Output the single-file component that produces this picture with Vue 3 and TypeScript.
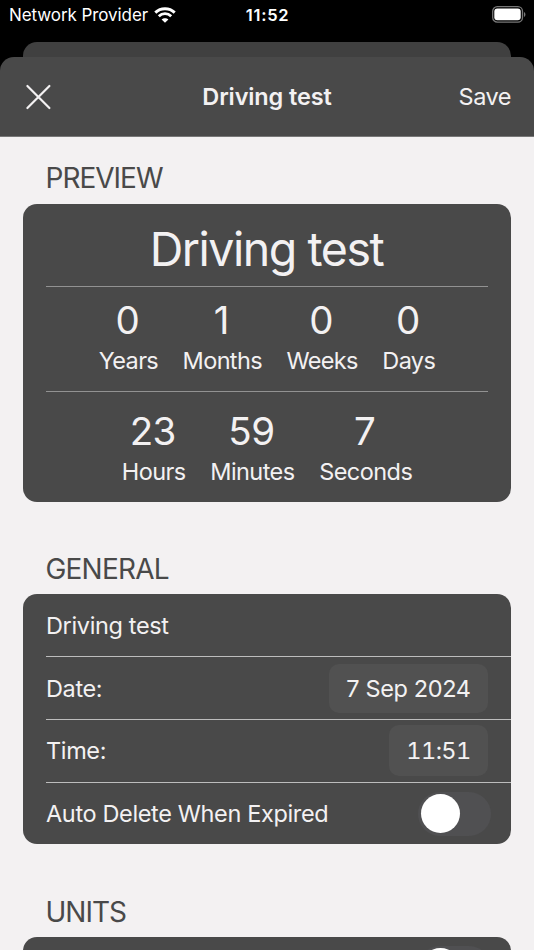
<script setup lang="ts">
import { ref } from 'vue'

interface Unit {
  value: number
  label: string
}

const name = ref('Driving test')
const autoDelete = ref(false)

const dateUnits: Unit[] = [
  { value: 0, label: 'Years' },
  { value: 1, label: 'Months' },
  { value: 0, label: 'Weeks' },
  { value: 0, label: 'Days' },
]
const timeUnits: Unit[] = [
  { value: 23, label: 'Hours' },
  { value: 59, label: 'Minutes' },
  { value: 7, label: 'Seconds' },
]
</script>

<template>
  <div class="screen">
    <header class="status">
      <div class="carrier">
        <span class="provider">Network Provider</span>
        <svg class="wifi" width="22" height="16" viewBox="0 0 22 16" fill="none" stroke="#fff">
          <path d="M1.3 5.6C6.7.4 15.3.4 20.7 5.6" stroke-width="2.9" />
          <path d="M4.8 9.2c3.5-3.3 8.9-3.3 12.4 0" stroke-width="2.8" />
          <path d="M11 15.8 7.6 12.4c1.8-1.7 5-1.7 6.8 0z" fill="#fff" stroke="none" />
        </svg>
      </div>
      <span class="clock">11:52</span>
      <svg class="battery" width="34" height="17" viewBox="0 0 34 17">
        <rect x=".7" y=".7" width="29.8" height="15.4" rx="4.6" fill="none" stroke="#777" stroke-width="1.3" />
        <rect x="2.3" y="2.4" width="26.4" height="11.9" rx="3" fill="#fff" />
        <path d="M32 5.9c1.9.7 1.9 4.3 0 5z" fill="#777" />
      </svg>
    </header>

    <div class="sheet-back"></div>
    <main class="sheet">
      <nav class="navbar">
        <button class="close" aria-label="Close">
          <svg width="26" height="26" viewBox="0 0 26 26" stroke="#f3f1f2" stroke-width="2.2" stroke-linecap="round">
            <path d="M2.4 2 24.4 24M24.4 2 2.4 24" />
          </svg>
        </button>
        <h1 class="nav-title">{{ name }}</h1>
        <button class="save">Save</button>
      </nav>

      <div class="content">
        <h2 class="heading preview-heading">PREVIEW</h2>
        <section class="card preview">
          <div class="event-name">{{ name }}</div>
          <div class="units date-units">
            <div v-for="u in dateUnits" :key="u.label" class="unit">
              <span class="value">{{ u.value }}</span>
              <span class="label">{{ u.label }}</span>
            </div>
          </div>
          <div class="units time-units">
            <div v-for="u in timeUnits" :key="u.label" class="unit">
              <span class="value">{{ u.value }}</span>
              <span class="label">{{ u.label }}</span>
            </div>
          </div>
        </section>

        <h2 class="heading general-heading">GENERAL</h2>
        <section class="card general">
          <div class="row"><span>{{ name }}</span></div>
          <div class="row">
            <span>Date:</span>
            <span class="pill date">7 Sep 2024</span>
          </div>
          <div class="row">
            <span>Time:</span>
            <span class="pill time">11:51</span>
          </div>
          <div class="row">
            <span>Auto Delete When Expired</span>
            <button class="switch" :class="{ on: autoDelete }" @click="autoDelete = !autoDelete">
              <span class="knob"></span>
            </button>
          </div>
        </section>

        <h2 class="heading units-heading">UNITS</h2>
        <section class="card unit-options">
          <button class="switch"><span class="knob"></span></button>
        </section>
      </div>
    </main>
  </div>
</template>

<style>
body {
  background: #000;
}
</style>

<style scoped>
* {
  box-sizing: border-box;
}
.screen {
  width: 534px;
  height: 950px;
  overflow: hidden;
  background: #000;
  color: #f3f1f2;
  font-family: Inter, "Liberation Sans", sans-serif;
  font-size: 23.5px;
  display: flex;
  flex-direction: column;
}
button {
  border: 0;
  padding: 0;
  margin: 0;
  background: none;
  color: inherit;
  font: inherit;
}
h1,
h2 {
  margin: 0;
}
.status {
  flex: none;
  height: 42px;
  padding: 0 8px 13px 9px;
  display: grid;
  grid-template-columns: 1fr auto 1fr;
  align-items: center;
  color: #fff;
}
.carrier {
  display: flex;
  align-items: center;
  gap: 6px;
}
.provider {
  font-size: 17px;
  letter-spacing: -0.08px;
  white-space: nowrap;
}
.clock {
  font-size: 16.5px;
  font-weight: 600;
  letter-spacing: 0.7px;
}
.battery {
  justify-self: end;
}
.sheet-back {
  flex: none;
  height: 15px;
  margin: 0 23px;
  border-radius: 14px 14px 0 0;
  background: #404040;
}
.sheet {
  flex: 1;
  min-height: 0;
  display: flex;
  flex-direction: column;
}
.navbar {
  flex: none;
  height: 80px;
  padding: 0 23px 0 25px;
  background: #494949;
  border-bottom: 1px solid #777;
  border-radius: 14px 14px 0 0;
  display: grid;
  grid-template-columns: 1fr auto 1fr;
  align-items: center;
}
.close {
  width: 26px;
  height: 26px;
}
.close svg {
  display: block;
}
.nav-title {
  padding-right: 2px;
  font-size: 23.5px;
  font-weight: 600;
  letter-spacing: -0.12px;
}
.save {
  justify-self: end;
  letter-spacing: -0.5px;
}
.content {
  flex: 1;
  min-height: 0;
  padding: 0 23px;
  background: #f3f1f2;
}
.heading {
  padding-left: 22.5px;
  font-size: 28px;
  line-height: 34px;
  font-weight: 400;
  color: #494949;
  letter-spacing: -1px;
}
.preview-heading {
  padding-top: 24px;
}
.card {
  background: #494949;
  border-radius: 14px;
  overflow: hidden;
}
.preview {
  margin-top: 9px;
  height: 298px;
  padding: 0 23px;
}
.event-name {
  height: 82px;
  padding: 16px 1px 0 0;
  text-align: center;
  font-size: 46.5px;
  line-height: 58px;
  letter-spacing: -1.45px;
}
.units {
  border-top: 1px solid #929292;
  display: flex;
  justify-content: center;
  gap: 24.5px;
}
.date-units {
  height: 105px;
  padding-top: 9px;
}
.time-units {
  padding-top: 15px;
}
.unit {
  display: flex;
  flex-direction: column;
  align-items: center;
}
.value {
  padding-right: 2px;
  font-size: 38.5px;
  line-height: 48px;
  letter-spacing: -0.6px;
}
.label {
  font-size: 23.5px;
  line-height: 34px;
  letter-spacing: -0.55px;
}
.date-units .label {
  letter-spacing: -0.65px;
}
.general-heading {
  margin-top: 50px;
  letter-spacing: -0.8px;
}
.general {
  margin-top: 8px;
}
.row {
  height: 62.67px;
  margin-left: 23px;
  padding-right: 23px;
  display: flex;
  align-items: center;
  justify-content: space-between;
  letter-spacing: -0.36px;
}
.row:first-child {
  height: 62.4px;
}
.row + .row {
  border-top: 1px solid #bdbdbd;
}
.pill {
  background: #515151;
  border-radius: 10px;
  display: flex;
  align-items: center;
  justify-content: center;
}
.date {
  width: 159px;
  height: 49px;
}
.time {
  width: 99px;
  height: 51px;
  font-variant-numeric: tabular-nums;
  letter-spacing: -0.6px;
}
.switch {
  flex: none;
  display: flex;
  align-items: center;
  width: 73px;
  height: 44px;
  padding: 0 2.5px;
  margin-right: -3px;
  border-radius: 22px;
  background: #505052;
}
.switch.on {
  justify-content: flex-end;
}
.knob {
  width: 39px;
  height: 39px;
  border-radius: 50%;
  background: #fff;
}
.units-heading {
  margin-top: 50.4px;
}
.unit-options {
  margin-top: 8px;
  height: 62px;
  padding: 9px 23px;
  display: flex;
  justify-content: flex-end;
}
</style>
